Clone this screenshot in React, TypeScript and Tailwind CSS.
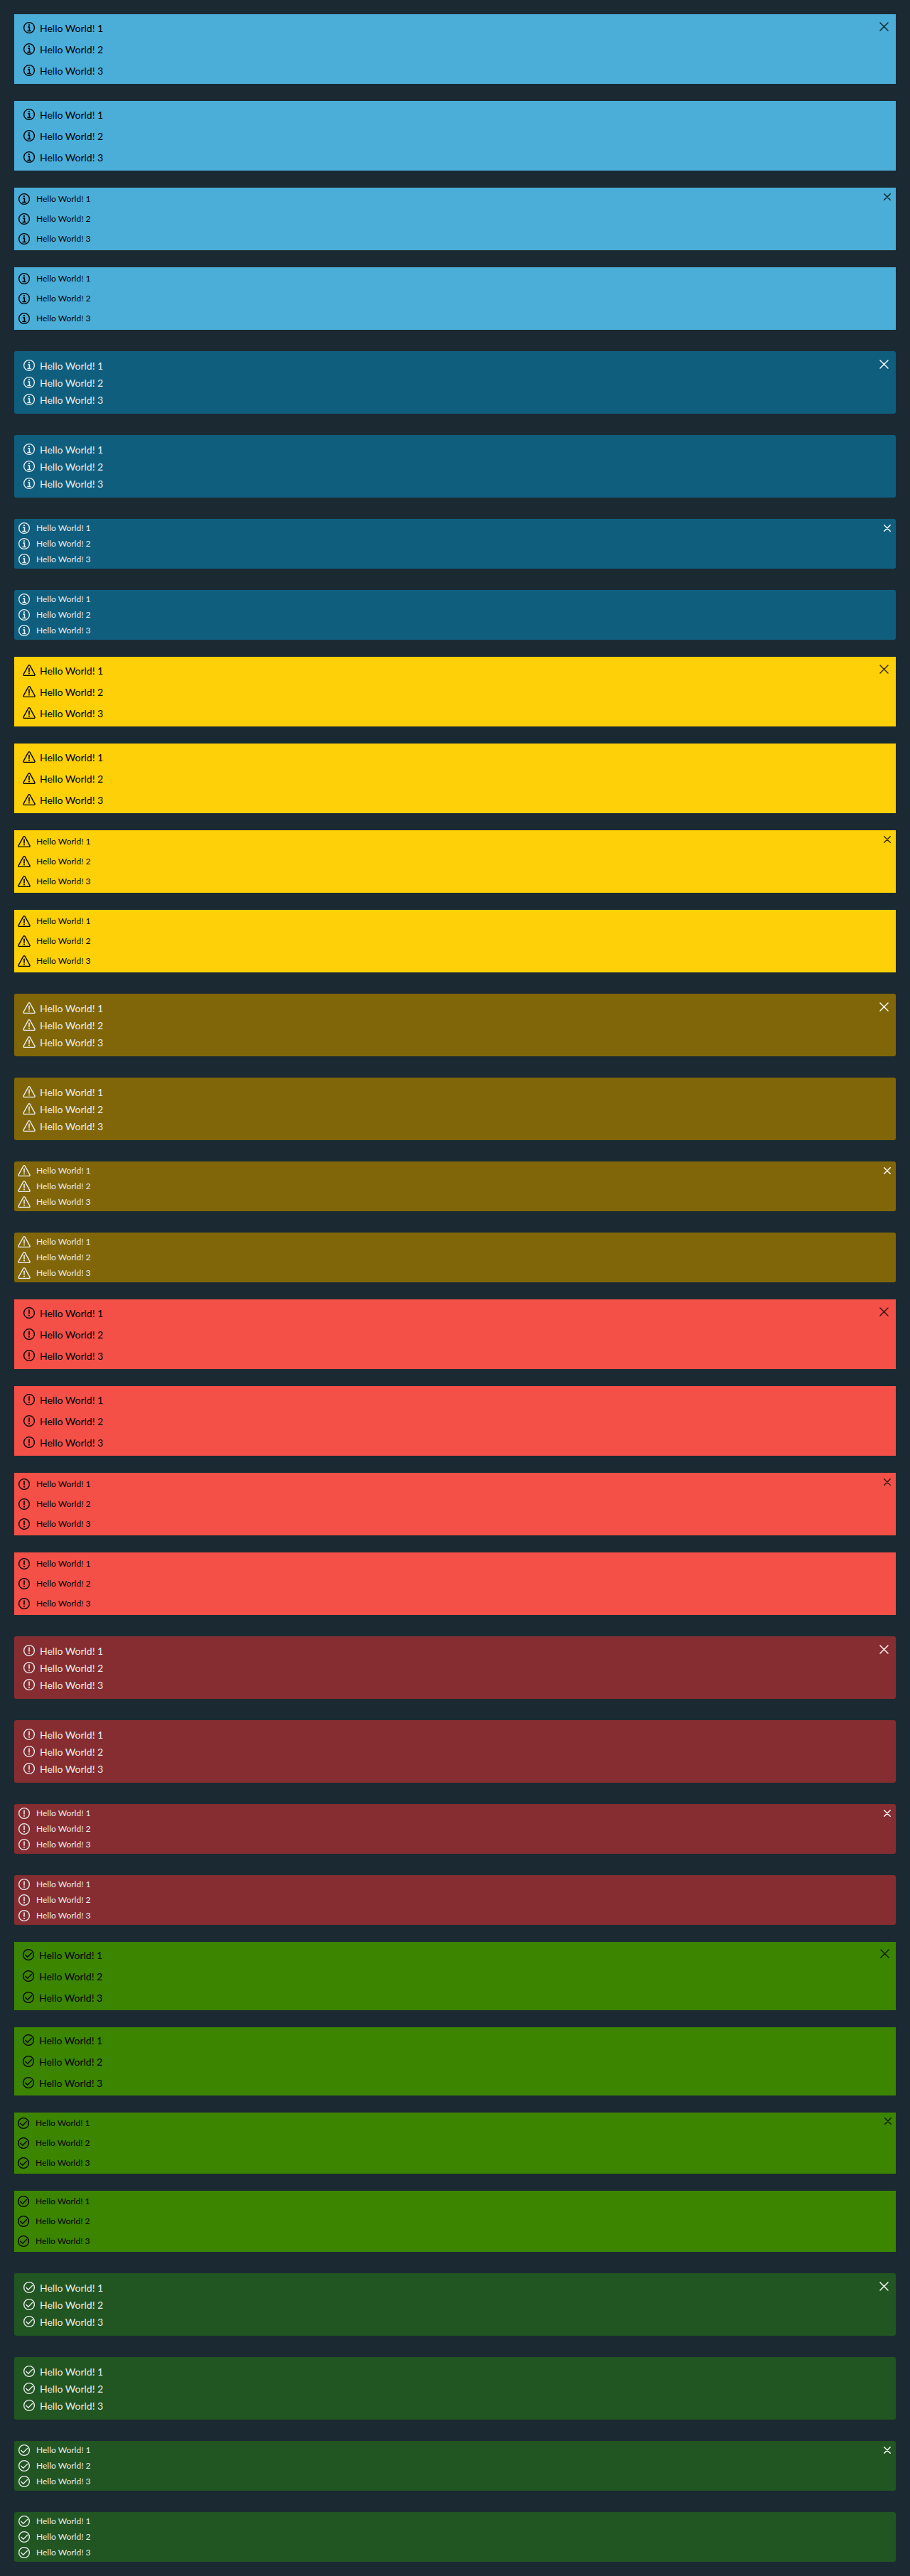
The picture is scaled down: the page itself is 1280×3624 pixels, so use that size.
import React from 'react';

type Status = 'info' | 'warning' | 'danger' | 'success';

const LIGHT: Record<Status, string> = {
  info: 'bg-[#4aaed9] border border-[#4aaed9]',
  warning: 'bg-[#fdd008] border border-[#fdd008]',
  danger: 'bg-[#f55047] border border-[#f55047]',
  success: 'bg-[#3c8500]',
};

const DARK: Record<Status, string> = {
  info: 'bg-[#0f5e7e] border-[#0f5e7e]',
  warning: 'bg-[#806609] border-[#806609]',
  danger: 'bg-[#852d31] border-[#852d31]',
  success: 'bg-[#215521] border-[#215521]',
};

function StatusIcon({ status }: { status: Status }) {
  return (
    <svg viewBox="0 0 36 36" className="size-[18px] shrink-0" fill="none" stroke="currentColor" strokeWidth="2.8" aria-hidden="true">
      {status === 'warning' ? (
        <path d="M16 4.4 2.2 29.2a2.4 2.4 0 0 0 2.1 3.6h27.4a2.4 2.4 0 0 0 2.1-3.6L20 4.4a2.3 2.3 0 0 0-4 0Z" />
      ) : (
        <circle cx="18" cy="18" r="14.8" />
      )}
      {status === 'info' && (
        <>
          <circle cx="17.9" cy="10.4" r="2.2" fill="currentColor" stroke="none" />
          <path d="M14 16h4.8v11M12.8 27h10.6" strokeWidth="3.2" />
        </>
      )}
      {status === 'warning' && (
        <>
          <path d="M18 12.4v9.8" strokeWidth="3.2" strokeLinecap="round" />
          <circle cx="18" cy="27" r="2" fill="currentColor" stroke="none" />
        </>
      )}
      {status === 'danger' && (
        <>
          <path d="M18 10v10" strokeWidth="3.2" strokeLinecap="round" />
          <circle cx="18" cy="25.6" r="2.1" fill="currentColor" stroke="none" />
        </>
      )}
      {status === 'success' && <path d="m9.5 18.5 6 6L27 13" strokeLinecap="round" />}
    </svg>
  );
}

interface AlertProps {
  status: Status;
  dark: boolean;
  small: boolean;
  closable: boolean;
}

function Alert({ status, dark, small, closable }: AlertProps) {
  const look = dark ? `mt-1.5 rounded-[3px] border-x text-[#e9ecef] ${DARK[status]}` : `text-black ${LIGHT[status]}`;
  const pad = small ? `pl-1 pr-1.5 ${dark ? 'py-0.5' : 'py-px'}` : `pl-[11px] pr-[9px] ${dark ? 'py-2' : 'py-[3px]'}`;
  const row = small ? (dark ? 'h-[22px]' : 'h-7') : dark ? 'h-6' : 'h-[30px]';
  const closeRow = small ? 'h-[22px]' : dark ? 'h-[21px]' : 'h-[27px]';
  const text = small ? 'gap-2 text-[12px]' : 'gap-1.5 text-[14px]';
  return (
    <div role="alert" className={`flex items-start ${look} ${pad}`}>
      <ul className="min-w-0 flex-1">
        {[1, 2, 3].map((n) => (
          <li key={n} className={`flex items-center ${row} ${text}`}>
            <StatusIcon status={status} />
            <span>Hello World! {n}</span>
          </li>
        ))}
      </ul>
      {closable && (
        <button
          type="button"
          aria-label="Close alert"
          className={`flex shrink-0 items-center ${closeRow} ${dark ? 'text-white' : 'text-black/80'}`}
        >
          <svg
            viewBox="0 0 12 12"
            className={small ? 'size-2.5' : 'size-[13px]'}
            fill="none"
            stroke="currentColor"
            strokeWidth={small ? 1.7 : 1.3}
            strokeLinecap="round"
            aria-hidden="true"
          >
            <path d="m.9.9 10.2 10.2M11.1.9.9 11.1" />
          </svg>
        </button>
      )}
    </div>
  );
}

const STATUSES: Status[] = ['info', 'warning', 'danger', 'success'];

export default function App() {
  return (
    <main className="flex min-h-screen flex-col gap-6 bg-[#1b2a32] p-5 font-['Lato',sans-serif]">
      {STATUSES.map((status) =>
        [false, true].map((dark) =>
          [false, true].map((small) =>
            [true, false].map((closable) => (
              <Alert
                key={`${status}-${dark}-${small}-${closable}`}
                status={status}
                dark={dark}
                small={small}
                closable={closable}
              />
            )),
          ),
        ),
      )}
    </main>
  );
}
